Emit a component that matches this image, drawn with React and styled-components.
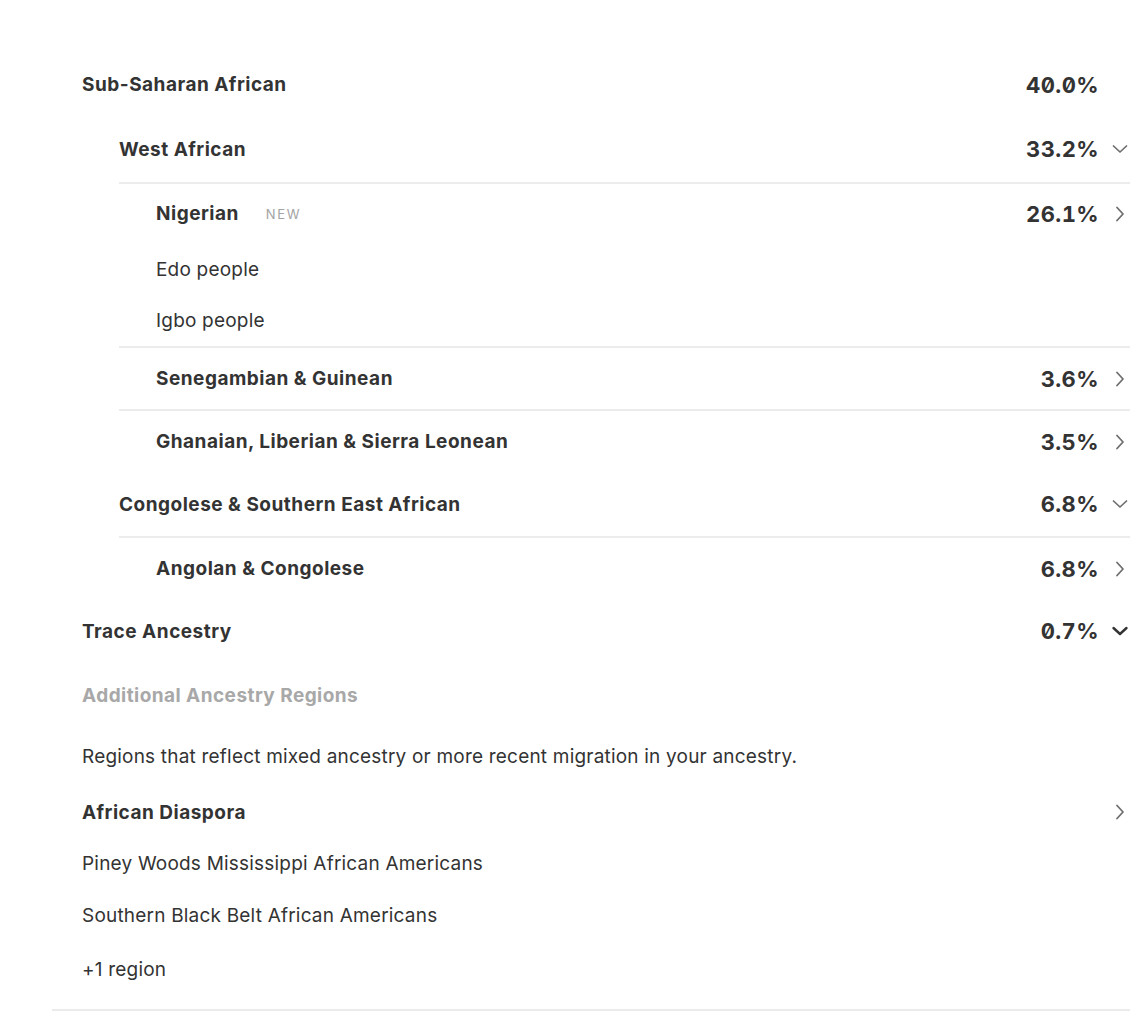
import React from 'react'
import styled, { createGlobalStyle } from 'styled-components';

const Global = createGlobalStyle`
  body {
    margin: 0;
    background: #fff;
    font-family: Inter, "Noto Sans", sans-serif;
    color: #333;
    overflow: hidden;
  }
`

const ChevronDown = ({ dark }) => (
  <svg width="18" height="18" viewBox="0 0 18 18" fill="none">
    <polyline points="2.5,6 9,12 15.5,6" stroke={dark ? '#333' : '#6e6e6e'} strokeWidth={dark ? 2.4 : 1.7} strokeLinecap="round" strokeLinejoin="round" />
  </svg>
)

const ChevronRight = () => (
  <svg width="18" height="18" viewBox="0 0 18 18" fill="none">
    <polyline points="6,2.5 12,9 6,15.5" stroke="#6e6e6e" strokeWidth="1.8" strokeLinecap="round" strokeLinejoin="round" />
  </svg>
)

const data = [
  { label: 'Sub-Saharan African', pct: '40.0%', h: 63 },
  { label: 'West African', pct: '33.2%', icon: 'down', h: 66, indent: 37 },
  { label: 'Nigerian', pct: '26.1%', icon: 'right', h: 61, indent: 37, pad: 37, line: true, isNew: true },
  { label: 'Edo people', sub: true, h: 52, indent: 37, pad: 37 },
  { label: 'Igbo people', sub: true, h: 51, indent: 37, pad: 37 },
  { label: 'Senegambian & Guinean', pct: '3.6%', icon: 'right', h: 63, indent: 37, pad: 37, line: true },
  { label: 'Ghanaian, Liberian & Sierra Leonean', pct: '3.5%', icon: 'right', h: 63, indent: 37, pad: 37, line: true },
  { label: 'Congolese & Southern East African', pct: '6.8%', icon: 'down', h: 64, indent: 37 },
  { label: 'Angolan & Congolese', pct: '6.8%', icon: 'right', h: 63, indent: 37, pad: 37, line: true },
  { label: 'Trace Ancestry', pct: '0.7%', icon: 'downDark', h: 64 },
]

function App() {
  return (
    <Page>
      <Global />
      <Panel>
        <List>
          {data.map((r, i) => (
            <Row key={i} $h={r.h} $indent={r.indent} $line={r.line}>
              <Label $pad={r.pad} $sub={r.sub}>
                {r.label}
                {r.isNew && <NewTag>NEW</NewTag>}
              </Label>
              {r.pct && (
                <Value>
                  <Pct>{r.pct}</Pct>
                  <IconSlot>
                    {r.icon === 'down' && <ChevronDown />}
                    {r.icon === 'downDark' && <ChevronDown dark />}
                    {r.icon === 'right' && <ChevronRight />}
                  </IconSlot>
                </Value>
              )}
            </Row>
          ))}

          <Row $h={65}>
            <Heading>Additional Ancestry Regions</Heading>
          </Row>
          <Row $h={57}>
            <Label $sub>Regions that reflect mixed ancestry or more recent migration in your ancestry.</Label>
          </Row>
          <Row $h={54}>
            <Label>African Diaspora</Label>
            <Value>
              <IconSlot><ChevronRight /></IconSlot>
            </Value>
          </Row>
          <Row $h={49}>
            <Label $sub>Piney Woods Mississippi African Americans</Label>
          </Row>
          <Row $h={54}>
            <Label $sub>Southern Black Belt African Americans</Label>
          </Row>
          <Row $h={54}>
            <Label $sub>+1 region</Label>
          </Row>
        </List>
      </Panel>
    </Page>
  );
}

const Page = styled.div`
  padding-top: 53px;
  width: 1133px;
`

const Panel = styled.div`
  margin-left: 52px;
  width: 1078px;
  padding-bottom: 13px;
  border-bottom: 2px solid #ebebeb;
`

const List = styled.div`
  margin-left: 30px;
  display: flex;
  flex-direction: column;
`

const Row = styled.div`
  display: flex;
  align-items: center;
  justify-content: space-between;
  height: ${p => p.$h}px;
  box-sizing: border-box;
  margin-left: ${p => p.$indent || 0}px;
  border-top: ${p => (p.$line ? '2px solid #ececec' : 'none')};
`

const Label = styled.div`
  display: flex;
  align-items: center;
  padding-left: ${p => p.$pad || 0}px;
  font-size: 19px;
  font-weight: ${p => (p.$sub ? 400 : 700)};
  color: #333;
  letter-spacing: ${p => (p.$sub ? '0.2px' : '0.5px')};
`

const Heading = styled.div`
  font-size: 19px;
  font-weight: 700;
  letter-spacing: 0.45px;
  color: #a8a8a8;
`

const NewTag = styled.span`
  margin-left: 27px;
  font-size: 13px;
  font-weight: 400;
  letter-spacing: 1.6px;
  color: #a3a3a3;
`

const Value = styled.div`
  display: flex;
  align-items: center;
`

const Pct = styled.span`
  font-size: 22px;
  font-weight: 700;
  letter-spacing: 0.4px;
  color: #333;
  font-feature-settings: "zero" 1, "tnum" 1;
`

const IconSlot = styled.span`
  display: flex;
  align-items: center;
  justify-content: flex-end;
  width: 31px;
  svg {
    margin-right: 1px;
  }
`

export default App;
